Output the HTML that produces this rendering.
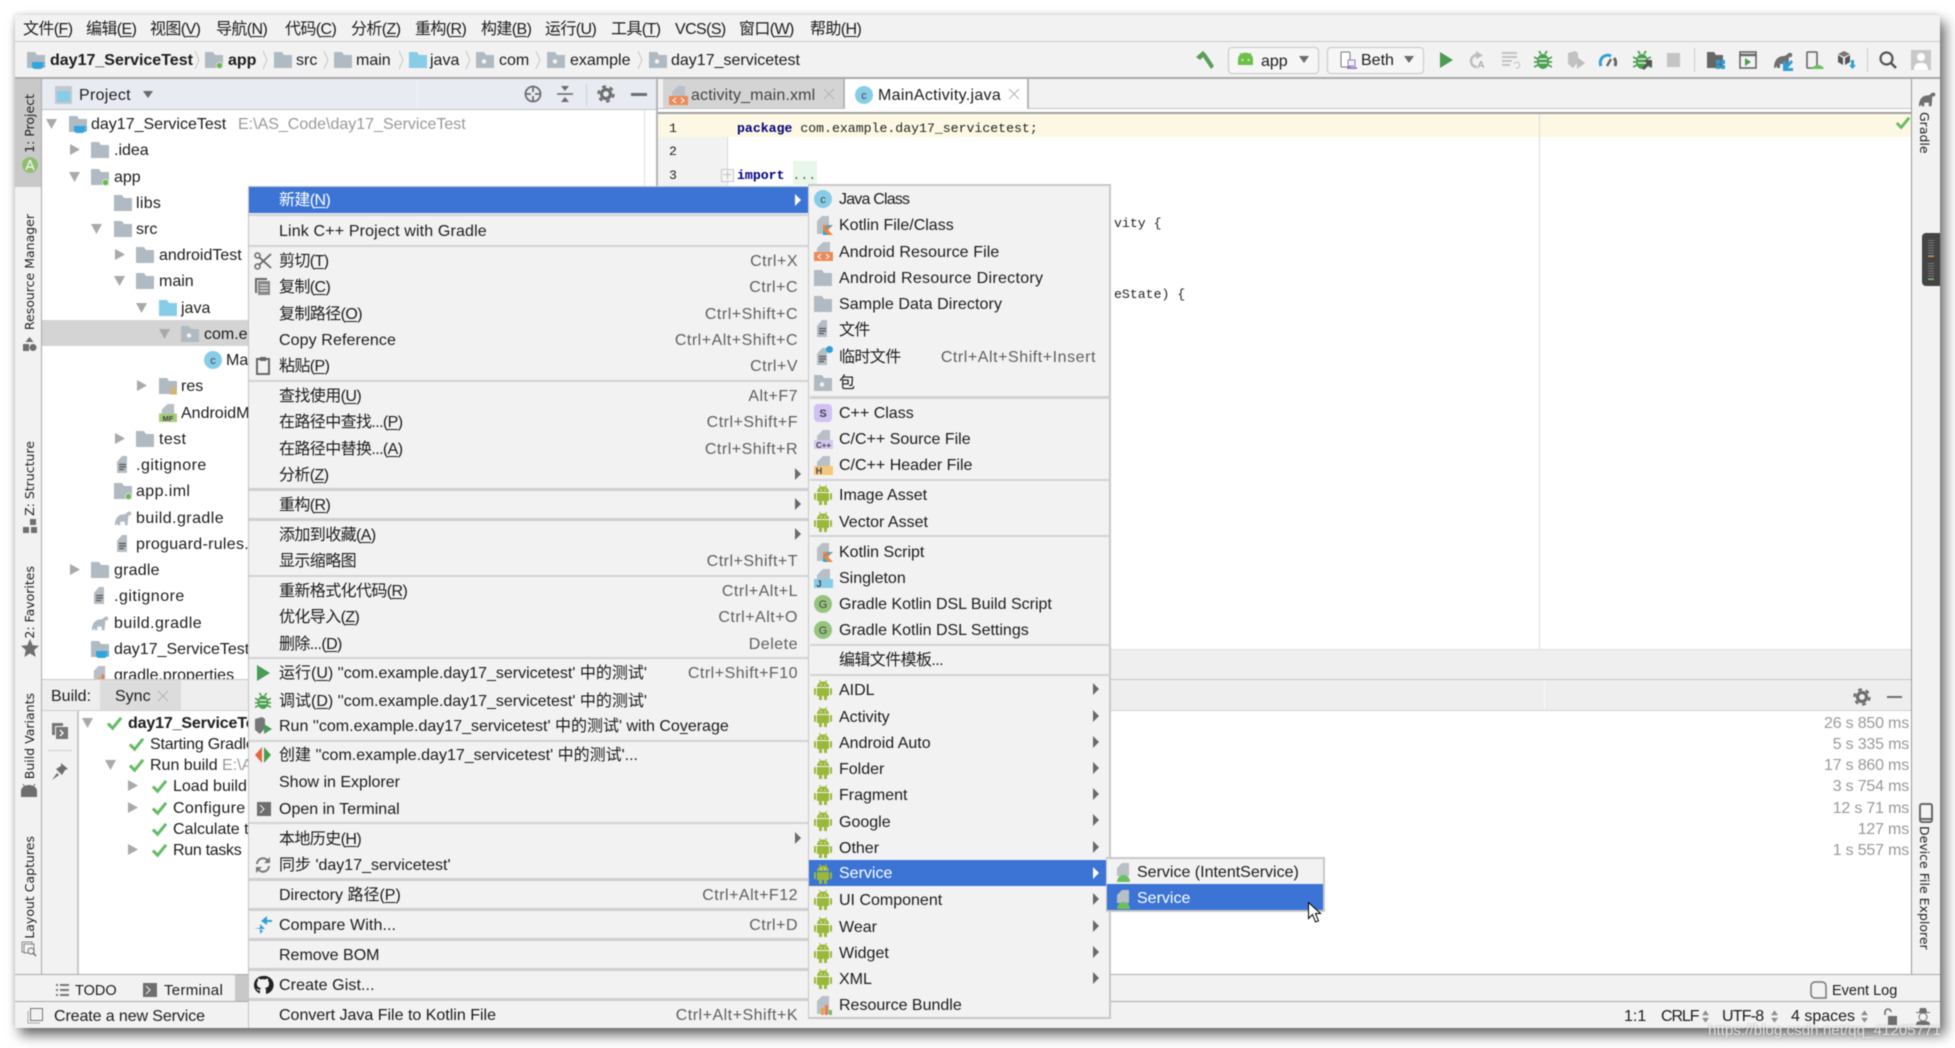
<!DOCTYPE html>
<html lang="zh"><head><meta charset="utf-8"><title>Android Studio</title>
<style>
html,body{margin:0;padding:0;background:#fff}
body{width:1955px;height:1048px;overflow:hidden;position:relative;font:16px "Liberation Sans","Noto Sans CJK SC",sans-serif;color:#1c1c1c}
#w{position:absolute;left:0;top:0;width:1955px;height:1048px;overflow:hidden;filter:blur(.4px)}
.b{position:absolute}
.t{position:absolute;white-space:nowrap;line-height:20px;margin-top:-9px}
.z{letter-spacing:-.6px}
.r{position:absolute;white-space:nowrap;line-height:20px;margin-top:-9px;color:#5f5f5f;text-align:right}
.d{right:1157px;letter-spacing:.5px}
.g{color:#999}
.w{color:#fff}
.i{position:absolute;width:18px;height:18px;overflow:visible}
.sp{position:absolute;left:249px;width:559px;height:2px;background:#d2d2d2}
.sb{position:absolute;left:249px;width:559px;height:3px;background:#cfcfcf}
.sq{position:absolute;left:810px;width:300px;height:2px;background:#d2d2d2}
.v{position:absolute;writing-mode:vertical-rl;transform:rotate(180deg);font:12.5px/16px "DejaVu Sans",sans-serif;color:#222;white-space:nowrap}
.v2{position:absolute;writing-mode:vertical-rl;font:12.5px/16px "DejaVu Sans",sans-serif;color:#222;white-space:nowrap}
.c{font:13.2px/20px "Liberation Mono",monospace;color:#222}
.k{font-weight:bold;color:#000080}
u{text-decoration-thickness:1px;text-underline-offset:2px}
</style></head><body>
<svg width="0" height="0" style="position:absolute">
<defs>
<symbol id="fo" viewBox="0 0 18 18"><path d="M0 1h8l2 3h8v13H0z" fill="#b0bac2"/></symbol>
<symbol id="fb" viewBox="0 0 18 18"><path d="M0 1h8l2 3h8v13H0z" fill="#87cde8"/></symbol>
<symbol id="fp" viewBox="0 0 18 18"><path d="M0 1h8l2 3h8v13H0z" fill="#b0bac2"/><circle cx="8" cy="10.500" r="2.200" fill="#f4f4f4"/></symbol>
<symbol id="fa" viewBox="0 0 18 18"><path d="M0 1h8l2 3h8v13H0z" fill="#b0bac2"/><circle cx="14.500" cy="14.500" r="3.500" fill="#f4f4f4"/><circle cx="14.500" cy="14.500" r="2.800" fill="#6db84b"/></symbol>
<symbol id="fm" viewBox="0 0 18 18"><path d="M0 1h8l2 3h8v13H0z" fill="#b0bac2"/><path d="M5 11h11v4a3 3 0 0 1-3 3H8a3 3 0 0 1-3-3z" fill="#2fa6de"/><path d="M16 12h2v3h-2" fill="none" stroke="#2fa6de"/></symbol>
<symbol id="fr" viewBox="0 0 18 18"><path d="M0 1h8l2 3h8v13H0z" fill="#b0bac2"/><path d="M11 10h7v1.500h-7zM11 13h7v1.500h-7zM11 16h7v1.500h-7z" fill="#e8b04a"/></symbol>
<symbol id="doc" viewBox="0 0 18 18"><path d="M8 0h5v17H3V6z" fill="#b4bcc4"/><path d="M5 8.500h7M5 11h7M5 13.500h5" stroke="#555" stroke-width="1.200"/></symbol>
<symbol id="ele" viewBox="0 0 20 18"><path d="M1 17C1 9 5 5 11 5c2 0 3-2 5-3s4 1 3 3-2 1-3 1l-1 11h-3v-4H7v4H4v-2l-2 2z" fill="#b0bac2"/></symbol>
<symbol id="eld" viewBox="0 0 20 18"><path d="M1 17C1 9 5 5 11 5c2 0 3-2 5-3s4 1 3 3-2 1-3 1l-1 11h-3v-4H7v4H4v-2l-2 2z" fill="#6f6f6f"/></symbol>
<symbol id="td" viewBox="0 0 12 12"><path d="M0 1h11L5.500 11z" fill="#a9a9a9"/></symbol>
<symbol id="tr" viewBox="0 0 12 12"><path d="M1 0v11l10-5.500z" fill="#a9a9a9"/></symbol>
<symbol id="ma" viewBox="0 0 8 12"><path d="M1 0v12l6-6z" fill="#6a6a6a"/></symbol>
<symbol id="mw" viewBox="0 0 8 12"><path d="M1 0v12l6-6z" fill="#fff"/></symbol>
<symbol id="ck" viewBox="0 0 18 18"><path d="M2 9l5 5L16 3" fill="none" stroke="#66bb66" stroke-width="3.200"/></symbol>
<symbol id="an" viewBox="0 0 18 20"><path d="M3 7a6 5.500 0 0 1 12 0z" fill="#9ab83a"/><path d="M5.500 0l1.500 3M12.500 0L11 3" stroke="#9ab83a"/><rect x="3" y="8" width="12" height="8" fill="#9ab83a"/><rect x="0" y="8" width="2" height="7" rx="1" fill="#9ab83a"/><rect x="16" y="8" width="2" height="7" rx="1" fill="#9ab83a"/><rect x="5" y="16" width="3" height="4" fill="#9ab83a"/><rect x="10" y="16" width="3" height="4" fill="#9ab83a"/><circle cx="7" cy="4.800" r=".700" fill="#f2f2f2"/><circle cx="11" cy="4.800" r=".700" fill="#f2f2f2"/></symbol>
<symbol id="cc" viewBox="0 0 18 18"><circle cx="9" cy="9" r="9" fill="#87cde8"/><text x="9" y="13" text-anchor="middle" font-size="11" font-family="Liberation Sans" fill="#444">c</text></symbol>
<symbol id="ggg" viewBox="0 0 18 18"><circle cx="9" cy="9" r="9" fill="#96c47e"/><text x="9" y="13" text-anchor="middle" font-size="11" font-family="Liberation Sans" fill="#444">G</text></symbol>
<symbol id="sss" viewBox="0 0 18 18"><rect width="18" height="18" rx="4" fill="#cfc1f4"/><text x="9" y="13" text-anchor="middle" font-size="11" font-family="Liberation Sans" font-weight="bold" fill="#444">S</text></symbol>
<symbol id="pg" viewBox="0 0 19 19"><path d="M9 0h7v10H3V6z" fill="#b8bfc6"/></symbol>
<symbol id="ar" viewBox="0 0 19 19"><path d="M9 0h7v10H3V6z" fill="#b8bfc6"/><rect y="10" width="19" height="9" fill="#ee8a5a"/><path d="M7 12l-3 2.500L7 17M12 12l3 2.500-3 2.500" fill="none" stroke="#fff"/></symbol>
<symbol id="kt" viewBox="0 0 19 19"><path d="M8 0h7v18H3V5z" fill="#b8bfc6"/><path d="M9 9h10l-5 5 5 5H9z" fill="#f0843c"/><path d="M9 19v-5l5 5zM9 14l5-5h5z" fill="#2fa6de"/></symbol>
<symbol id="cp" viewBox="0 0 19 19"><path d="M9 0h7v10H3V6z" fill="#b8bfc6"/><rect y="10" width="19" height="9" fill="#d5c8f2"/><text x="9.500" y="18" text-anchor="middle" font-size="8" font-weight="bold" font-family="Liberation Sans" fill="#444">C++</text></symbol>
<symbol id="hh" viewBox="0 0 19 19"><path d="M9 0h7v10H3V6z" fill="#b8bfc6"/><rect y="10" width="19" height="9" fill="#f5c77a"/><text x="5" y="18" text-anchor="middle" font-size="9" font-weight="bold" font-family="Liberation Sans" fill="#444">H</text></symbol>
<symbol id="jj" viewBox="0 0 19 19"><path d="M9 0h7v10H3V6z" fill="#b8bfc6"/><rect y="10" width="19" height="9" fill="#87cde8"/><text x="5" y="18" text-anchor="middle" font-size="9" font-weight="bold" font-family="Liberation Sans" fill="#444">J</text></symbol>
<symbol id="mf" viewBox="0 0 19 19"><path d="M9 0h7v10H3V6z" fill="#b8bfc6"/><rect y="10" width="19" height="9" fill="#a5cc7a"/><text x="9.500" y="18" text-anchor="middle" font-size="8" font-weight="bold" font-family="Liberation Sans" fill="#444">MF</text></symbol>
<symbol id="sv" viewBox="0 0 19 19"><path d="M8 0h7v13H3V5z" fill="#b8bfc6"/><path d="M3 19a6.500 7 0 0 1 13 0z" fill="#6cbf5f"/></symbol>
<symbol id="rb" viewBox="0 0 19 19"><path d="M8 0h7v18H3V5z" fill="#b8bfc6"/><path d="M7 12h3v7H7z" fill="#e7a53c"/><path d="M11 9h3v10h-3z" fill="#ee7a4a"/><path d="M15 14h3v5h-3z" fill="#6cbf5f"/></symbol>
<symbol id="bug" viewBox="0 0 18 20"><ellipse cx="9" cy="11.500" rx="6" ry="7.500" fill="#4ba050"/><path d="M0 7l4 2M18 7l-4 2M0 12h4M18 12h-4M0 17l4-2M18 17l-4-2M5 1l2 3M13 1l-2 3" stroke="#4ba050" stroke-width="1.800"/><path d="M5 9h8M5 13h8" stroke="#f2f2f2" stroke-width="1.300"/></symbol>
<symbol id="gear" viewBox="0 0 18 18"><circle cx="9" cy="9" r="4.500" fill="none" stroke="#6e6e6e" stroke-width="3.200"/><circle cx="9" cy="9" r="7.500" fill="none" stroke="#6e6e6e" stroke-width="2.400" stroke-dasharray="3.800 4"/></symbol>
<symbol id="chev" viewBox="0 0 6 18"><path d="M1 0l4 9-4 9" fill="none" stroke="#c8c8c8"/></symbol>
<symbol id="updn" viewBox="0 0 8 14"><path d="M0 5.500L4 0l4 5.500zM0 8.500L4 14l4-5.500z" fill="#8e8e8e"/></symbol>
</defs></svg>
<div id="w">
<div class="b" style="left:15px;top:15px;width:1925px;height:1013px;background:#f2f2f2;box-shadow:5px 7px 12px rgba(0,0,0,.6),-1px -1px 5px rgba(0,0,0,.12)"></div>

<!-- menu bar -->
<div class="t z" style="left:23px;top:29px">文件(<u>F</u>)</div>
<div class="t z" style="left:86px;top:29px">编辑(<u>E</u>)</div>
<div class="t z" style="left:150px;top:29px">视图(<u>V</u>)</div>
<div class="t z" style="left:216px;top:29px">导航(<u>N</u>)</div>
<div class="t z" style="left:285px;top:29px">代码(<u>C</u>)</div>
<div class="t z" style="left:351px;top:29px">分析(<u>Z</u>)</div>
<div class="t z" style="left:415px;top:29px">重构(<u>R</u>)</div>
<div class="t z" style="left:481px;top:29px">构建(<u>B</u>)</div>
<div class="t z" style="left:545px;top:29px">运行(<u>U</u>)</div>
<div class="t z" style="left:611px;top:29px">工具(<u>T</u>)</div>
<div class="t z" style="left:675px;top:29px">VCS(<u>S</u>)</div>
<div class="t z" style="left:739px;top:29px">窗口(<u>W</u>)</div>
<div class="t z" style="left:810px;top:29px">帮助(<u>H</u>)</div>
<div class="b" style="left:15px;top:41px;width:1925px;height:1px;background:#c9c9c9"></div>

<!-- breadcrumb -->
<svg class="i" style="left:27px;top:51px"><use href="#fm"/></svg>
<div class="t" style="left:50px;top:60px;font-weight:bold">day17_ServiceTest</div>
<svg class="i" style="left:194px;top:51px;width:6px"><use href="#chev"/></svg>
<svg class="i" style="left:205px;top:51px"><use href="#fa"/></svg>
<div class="t" style="left:228px;top:60px;font-weight:bold">app</div>
<svg class="i" style="left:262px;top:51px;width:6px"><use href="#chev"/></svg>
<svg class="i" style="left:274px;top:51px"><use href="#fo"/></svg>
<div class="t" style="left:296px;top:60px">src</div>
<svg class="i" style="left:323px;top:51px;width:6px"><use href="#chev"/></svg>
<svg class="i" style="left:334px;top:51px"><use href="#fo"/></svg>
<div class="t" style="left:356px;top:60px">main</div>
<svg class="i" style="left:398px;top:51px;width:6px"><use href="#chev"/></svg>
<svg class="i" style="left:409px;top:51px"><use href="#fb"/></svg>
<div class="t" style="left:430px;top:60px">java</div>
<svg class="i" style="left:465px;top:51px;width:6px"><use href="#chev"/></svg>
<svg class="i" style="left:476px;top:51px"><use href="#fp"/></svg>
<div class="t" style="left:499px;top:60px">com</div>
<svg class="i" style="left:535px;top:51px;width:6px"><use href="#chev"/></svg>
<svg class="i" style="left:547px;top:51px"><use href="#fp"/></svg>
<div class="t" style="left:570px;top:60px">example</div>
<svg class="i" style="left:637px;top:51px;width:6px"><use href="#chev"/></svg>
<svg class="i" style="left:649px;top:51px"><use href="#fp"/></svg>
<div class="t" style="left:671px;top:60px">day17_servicetest</div>
<div class="b" style="left:15px;top:77px;width:1925px;height:2px;background:#a9a9a9"></div>

<!-- toolbar -->
<svg class="i" style="left:1195px;top:50px;width:20px;height:20px" viewBox="0 0 20 20"><path d="M1 7l7-6 3 3-6 6zM8 7l3-3 8 12-3 3z" fill="#5a9e5a"/></svg>
<div class="b" style="left:1228px;top:47px;width:89px;height:25px;border:1px solid #c6c6c6;border-radius:4px;background:#f6f6f6"></div>
<svg class="i" style="left:1238px;top:53px;width:15px;height:12px" viewBox="0 0 15 12"><path d="M0 12V6a7 6 0 0 1 15 0v6z" fill="#6cc04a"/><path d="M2 0l2 3M13 0l-2 3" stroke="#6cc04a"/><circle cx="4.500" cy="7" r="1" fill="#f2f2f2"/><circle cx="10.500" cy="7" r="1" fill="#f2f2f2"/></svg>
<div class="t" style="left:1261px;top:61px">app</div>
<svg class="i" style="left:1299px;top:56px;width:10px;height:8px" viewBox="0 0 10 8"><path d="M0 0h10L5 7z" fill="#6a6a6a"/></svg>
<div class="b" style="left:1327px;top:47px;width:95px;height:25px;border:1px solid #c6c6c6;border-radius:4px;background:#f6f6f6"></div>
<svg class="i" style="left:1340px;top:51px;width:17px;height:19px" viewBox="0 0 17 19"><rect x="1" y="1" width="9" height="15" rx="1" fill="#fff" stroke="#777"/><rect x="8" y="9" width="7" height="6" fill="#f2f2f2" stroke="#9a7ec8"/><path d="M7 17h10" stroke="#9a7ec8" stroke-width="2"/></svg>
<div class="t" style="left:1361px;top:60px">Beth</div>
<svg class="i" style="left:1404px;top:56px;width:10px;height:8px" viewBox="0 0 10 8"><path d="M0 0h10L5 7z" fill="#6a6a6a"/></svg>

<svg class="i" style="left:1437px;top:51px" viewBox="0 0 18 18"><path d="M3 1l13 8-13 8z" fill="#499c54"/></svg>
<svg class="i" style="left:1468px;top:51px" viewBox="0 0 18 18"><path d="M9 4a6 6 0 1 0 0 12" fill="none" stroke="#bdbdbd" stroke-width="2.400"/><path d="M8 0l7 4.500L8 8z" fill="#bdbdbd"/><text x="13" y="17" font-size="10" font-family="Liberation Sans" text-anchor="middle" fill="#999">A</text></svg>
<svg class="i" style="left:1502px;top:51px" viewBox="0 0 18 18"><path d="M0 2h15M0 6h15M0 10h10M0 14h8" stroke="#c2c2c2" stroke-width="2"/><path d="M12 13a3 3 0 1 1 2 4" fill="none" stroke="#c2c2c2"/></svg>
<svg class="i" style="left:1534px;top:50px;width:18px;height:20px"><use href="#bug"/></svg>
<svg class="i" style="left:1567px;top:51px" viewBox="0 0 18 18"><path d="M1 2l7-2 3 2v9l-5 6-5-4z" fill="#c2c2c2"/><path d="M10 6l8 6-8 6z" fill="#bdbdbd"/></svg>
<svg class="i" style="left:1599px;top:51px" viewBox="0 0 18 18"><path d="M2 15a7.500 7.500 0 0 1 10-10" fill="none" stroke="#2f9ed8" stroke-width="3"/><path d="M15 7a7.500 7.500 0 0 1 1 8" fill="none" stroke="#666" stroke-width="3"/><path d="M8 15l4-7" stroke="#666" stroke-width="2.400"/></svg>
<svg class="i" style="left:1633px;top:50px;width:18px;height:20px"><use href="#bug"/></svg>
<svg class="i" style="left:1642px;top:60px;width:10px;height:10px" viewBox="0 0 10 10"><path d="M2 0h8v8L7 5 2 10 0 8l5-5z" fill="#555"/></svg>
<div class="b" style="left:1667px;top:53px;width:13px;height:14px;background:#c4c4c4"></div>
<div class="b" style="left:1694px;top:48px;width:1px;height:24px;background:#cdcdcd"></div>
<svg class="i" style="left:1707px;top:51px" viewBox="0 0 18 18"><path d="M0 1h7l2 3h7v13H0z" fill="#666"/><path d="M9 9h4v4H9zM14 9h4v4h-4zM9 14h4v4H9zM14 14h4v4h-4z" fill="#2f9ed8"/></svg>
<svg class="i" style="left:1739px;top:51px" viewBox="0 0 18 18"><rect x="1" y="1" width="16" height="16" fill="#f4f4f4" stroke="#666" stroke-width="1.600"/><path d="M1 4h16" stroke="#666" stroke-width="2.400"/><path d="M6 7v8l6-4z" fill="#499c54"/></svg>
<svg class="i" style="left:1773px;top:51px;width:20px;height:18px"><use href="#eld"/></svg>
<svg class="i" style="left:1782px;top:60px;width:11px;height:11px" viewBox="0 0 11 11"><path d="M11 2l-2-2-5 5V1H1v10h10V8H6z" fill="#2f9ed8"/></svg>
<svg class="i" style="left:1806px;top:51px" viewBox="0 0 18 18"><rect x="1" y="1" width="10" height="16" rx="1" fill="none" stroke="#666" stroke-width="1.600"/><path d="M6 18a6.500 6.500 0 0 1 12 0z" fill="#6cbf5f"/></svg>
<svg class="i" style="left:1838px;top:51px" viewBox="0 0 18 18"><path d="M6 0l6 3-6 3-6-3z" fill="#777"/><path d="M0 4l5 3v7l-5-3zM12 4L7 7v7l5-3z" fill="#555"/><path d="M13 9h3v5h2l-3.500 4-3.500-4h2z" fill="#2f9ed8"/></svg>
<div class="b" style="left:1867px;top:48px;width:1px;height:24px;background:#cdcdcd"></div>
<svg class="i" style="left:1879px;top:51px" viewBox="0 0 18 18"><circle cx="7.500" cy="7.500" r="6" fill="none" stroke="#555" stroke-width="2.200"/><path d="M12 12l5 5" stroke="#555" stroke-width="2.600"/></svg>
<svg class="i" style="left:1911px;top:50px;width:20px;height:20px" viewBox="0 0 20 20"><rect width="20" height="20" fill="#c8c8c8"/><circle cx="10" cy="7" r="4" fill="#fff"/><path d="M3 20c0-6 3-7 7-7s7 1 7 7z" fill="#fff"/></svg>

<!-- project panel -->
<div class="b" style="left:15px;top:79px;width:26px;height:949px;background:#f2f2f2"></div>
<div class="b" style="left:15px;top:79px;width:26px;height:108px;background:#c9c9c9"></div>
<div class="b" style="left:41px;top:79px;width:1px;height:895px;background:#a9a9a9"></div>
<div class="b" style="left:42px;top:79px;width:614px;height:30px;background:#e8ebf1"></div>
<div class="b" style="left:42px;top:109px;width:614px;height:1px;background:#c4c4c4"></div>
<div class="b" style="left:417px;top:79px;width:1px;height:30px;background:#f4f4f8"></div>
<div class="b" style="left:42px;top:110px;width:614px;height:570px;background:#fff"></div>
<div class="b" style="left:644px;top:110px;width:1px;height:570px;background:#e0e0e0"></div>
<div class="b" style="left:656px;top:79px;width:2px;height:600px;background:#b5b5b5"></div>
<svg class="i" style="left:55px;top:86px" viewBox="0 0 18 18"><rect x="0" y="0" width="17" height="18" fill="#c4c9ce"/><rect x="2" y="5" width="13" height="11" fill="#87cde8"/></svg>
<div class="t" style="left:79px;top:95px;letter-spacing:.3px">Project</div>
<svg class="i" style="left:143px;top:91px;width:10px;height:8px" viewBox="0 0 10 8"><path d="M0 0h10L5 7z" fill="#6a6a6a"/></svg>
<svg class="i" style="left:524px;top:85px" viewBox="0 0 18 18"><circle cx="9" cy="9" r="7.500" fill="none" stroke="#6e6e6e" stroke-width="1.800"/><path d="M9 1v6M9 11v6M1 9h6M11 9h6" stroke="#6e6e6e" stroke-width="1.800"/></svg>
<svg class="i" style="left:556px;top:85px" viewBox="0 0 18 18"><path d="M1 9h16" stroke="#6e6e6e" stroke-width="1.600"/><path d="M5 1h8L9 6zM5 17h8L9 12z" fill="#6e6e6e"/></svg>
<div class="b" style="left:586px;top:84px;width:1px;height:22px;background:#cdcfd6"></div>
<svg class="i" style="left:597px;top:85px"><use href="#gear"/></svg>
<div class="b" style="left:631px;top:93px;width:16px;height:3px;background:#6e6e6e"></div>

<div class="b" style="left:42px;top:320px;width:220px;height:26px;background:#d4d4d4"></div>
<svg class="i" style="left:46px;top:118px;width:12px;height:12px"><use href="#td"/></svg>
<svg class="i" style="left:69px;top:115px"><use href="#fm"/></svg>
<div class="t" style="left:91px;top:124px">day17_ServiceTest</div>
<div class="t g" style="left:238px;top:124px">E:\AS_Code\day17_ServiceTest</div>
<svg class="i" style="left:69px;top:144px;width:12px;height:12px"><use href="#tr"/></svg>
<svg class="i" style="left:91px;top:141px"><use href="#fo"/></svg>
<div class="t" style="left:114px;top:150px">.idea</div>
<svg class="i" style="left:69px;top:171px;width:12px;height:12px"><use href="#td"/></svg>
<svg class="i" style="left:91px;top:168px"><use href="#fa"/></svg>
<div class="t" style="left:114px;top:177px">app</div>
<svg class="i" style="left:114px;top:194px"><use href="#fo"/></svg>
<div class="t" style="left:136px;top:203px;letter-spacing:.3px">libs</div>
<svg class="i" style="left:91px;top:223px;width:12px;height:12px"><use href="#td"/></svg>
<svg class="i" style="left:114px;top:220px"><use href="#fo"/></svg>
<div class="t" style="left:136px;top:229px">src</div>
<svg class="i" style="left:114px;top:249px;width:12px;height:12px"><use href="#tr"/></svg>
<svg class="i" style="left:136px;top:246px"><use href="#fo"/></svg>
<div class="t" style="left:159px;top:255px">androidTest</div>
<svg class="i" style="left:114px;top:275px;width:12px;height:12px"><use href="#td"/></svg>
<svg class="i" style="left:136px;top:272px"><use href="#fo"/></svg>
<div class="t" style="left:159px;top:281px">main</div>
<svg class="i" style="left:136px;top:302px;width:12px;height:12px"><use href="#td"/></svg>
<svg class="i" style="left:159px;top:299px"><use href="#fb"/></svg>
<div class="t" style="left:181px;top:308px">java</div>
<svg class="i" style="left:159px;top:328px;width:12px;height:12px"><use href="#td"/></svg>
<svg class="i" style="left:181px;top:325px"><use href="#fp"/></svg>
<div class="t" style="left:204px;top:334px">com.example.day17_servicetest</div>
<svg class="i" style="left:204px;top:351px"><use href="#cc"/></svg>
<div class="t" style="left:226px;top:360px">MainActivity</div>
<svg class="i" style="left:136px;top:380px;width:12px;height:12px"><use href="#tr"/></svg>
<svg class="i" style="left:159px;top:377px"><use href="#fr"/></svg>
<div class="t" style="left:181px;top:386px">res</div>
<svg class="i" style="left:159px;top:404px"><use href="#mf"/></svg>
<div class="t" style="left:181px;top:413px">AndroidManifest.xml</div>
<svg class="i" style="left:114px;top:433px;width:12px;height:12px"><use href="#tr"/></svg>
<svg class="i" style="left:136px;top:430px"><use href="#fo"/></svg>
<div class="t" style="left:159px;top:439px;letter-spacing:.4px">test</div>
<svg class="i" style="left:114px;top:456px"><use href="#doc"/></svg>
<div class="t" style="left:136px;top:465px;letter-spacing:.5px">.gitignore</div>
<svg class="i" style="left:114px;top:482px"><use href="#fa"/></svg>
<div class="t" style="left:136px;top:491px;letter-spacing:.4px">app.iml</div>
<svg class="i" style="left:114px;top:509px"><use href="#ele"/></svg>
<div class="t" style="left:136px;top:518px;letter-spacing:.45px">build.gradle</div>
<svg class="i" style="left:114px;top:535px"><use href="#doc"/></svg>
<div class="t" style="left:136px;top:544px;letter-spacing:.3px">proguard-rules.pro</div>
<svg class="i" style="left:69px;top:564px;width:12px;height:12px"><use href="#tr"/></svg>
<svg class="i" style="left:91px;top:561px"><use href="#fo"/></svg>
<div class="t" style="left:114px;top:570px;letter-spacing:.2px">gradle</div>
<svg class="i" style="left:91px;top:587px"><use href="#doc"/></svg>
<div class="t" style="left:114px;top:596px;letter-spacing:.5px">.gitignore</div>
<svg class="i" style="left:91px;top:614px"><use href="#ele"/></svg>
<div class="t" style="left:114px;top:623px;letter-spacing:.45px">build.gradle</div>
<svg class="i" style="left:91px;top:640px"><use href="#fm"/></svg>
<div class="t" style="left:114px;top:649px">day17_ServiceTest.iml</div>
<svg class="i" style="left:91px;top:666px"><use href="#rb"/></svg>
<div class="t" style="left:114px;top:675px">gradle.properties</div>

<!-- editor -->
<div class="b" style="left:658px;top:79px;width:1254px;height:29px;background:#f2f2f2"></div>
<div class="b" style="left:658px;top:108px;width:1254px;height:1px;background:#c4c4c4"></div>
<div class="b" style="left:663px;top:79px;width:180px;height:29px;background:#d4d4d4;border-right:2px solid #b5b5b5"></div>
<div class="b" style="left:845px;top:79px;width:182px;height:30px;background:#fff;border-right:2px solid #b5b5b5"></div>
<svg class="i" style="left:669px;top:86px;width:19px;height:19px"><use href="#ar"/></svg>
<div class="t" style="left:691px;top:95px;color:#444;letter-spacing:.15px">activity_main.xml</div>
<svg class="i" style="left:824px;top:89px;width:10px;height:10px" viewBox="0 0 10 10"><path d="M0 0l10 10M10 0L0 10" stroke="#b5b5b5"/></svg>
<svg class="i" style="left:855px;top:86px"><use href="#cc"/></svg>
<div class="t" style="left:878px;top:95px;letter-spacing:.3px">MainActivity.java</div>
<svg class="i" style="left:1009px;top:89px;width:10px;height:10px" viewBox="0 0 10 10"><path d="M0 0l10 10M10 0L0 10" stroke="#b5b5b5"/></svg>
<div class="b" style="left:658px;top:109px;width:1254px;height:3px;background:#fff"></div>
<div class="b" style="left:658px;top:112px;width:1254px;height:2px;background:#a0a0a0"></div>
<div class="b" style="left:658px;top:114px;width:1254px;height:535px;background:#fff"></div>
<div class="b" style="left:658px;top:114px;width:69px;height:535px;background:#f2f2f2;border-right:1px solid #d8d8d8"></div>
<div class="b" style="left:658px;top:114px;width:1254px;height:23px;background:#fdf8e3"></div>
<div class="t c g" style="left:669px;top:128px">1</div>
<div class="t c g" style="left:669px;top:151px">2</div>
<div class="t c g" style="left:669px;top:175px">3</div>
<div class="t c" style="left:737px;top:128px"><span class="k">package</span> com.example.day17_servicetest;</div>
<div class="b" style="left:793px;top:161px;width:24px;height:24px;background:#e9f6ea"></div>
<div class="b" style="left:721px;top:169px;width:11px;height:11px;border:1px solid #c8c8c8;background:#f6f6f6"></div>
<div class="b" style="left:723px;top:174px;width:8px;height:1px;background:#bbb"></div>
<div class="b" style="left:727px;top:171px;width:1px;height:8px;background:#bbb"></div>
<div class="t c" style="left:737px;top:175px"><span class="k">import</span> <span style="color:#555">...</span></div>
<div class="t c" style="left:1114px;top:223px">vity {</div>
<div class="t c" style="left:1114px;top:294px">eState) {</div>
<div class="b" style="left:1539px;top:114px;width:1px;height:535px;background:#dcdcdc"></div>
<svg class="i" style="left:1895px;top:115px;width:16px;height:16px"><use href="#ck"/></svg>
<div class="b" style="left:658px;top:649px;width:1254px;height:1px;background:#ddd"></div>
<div class="b" style="left:658px;top:650px;width:1254px;height:29px;background:#efefef"></div>

<!-- right strip -->
<div class="b" style="left:1911px;top:79px;width:1px;height:895px;background:#999"></div>
<svg class="i" style="left:1918px;top:90px"><use href="#eld"/></svg>
<div class="v2" style="left:1916px;top:112px;font-size:12.5px">Gradle</div>
<div class="b" style="left:1922px;top:233px;width:18px;height:53px;background:#444;border-radius:4px 0 0 4px"></div>
<div class="b" style="left:1928px;top:240px;width:6px;height:16px;background:repeating-linear-gradient(#777 0 1px,#444 1px 2.500px)"></div>
<div class="b" style="left:1928px;top:256px;width:6px;height:1px;background:#e8962c"></div>
<div class="b" style="left:1928px;top:263px;width:6px;height:16px;background:repeating-linear-gradient(#777 0 1px,#444 1px 2.500px)"></div>
<div class="b" style="left:1928px;top:279px;width:6px;height:1px;background:#7ec84a"></div>
<svg class="i" style="left:1917px;top:804px" viewBox="0 0 18 18"><rect x="3" y="0" width="12" height="18" rx="2" fill="#f4f4f4" stroke="#666" stroke-width="2"/><path d="M3 15h12" stroke="#666" stroke-width="2"/></svg>
<div class="v2" style="left:1916px;top:826px">Device File Explorer</div>

<!-- build panel -->
<div class="b" style="left:42px;top:679px;width:1869px;height:1px;background:#c9c9c9"></div>
<div class="b" style="left:42px;top:680px;width:1869px;height:30px;background:#eeeeee"></div>
<div class="b" style="left:100px;top:680px;width:81px;height:30px;background:#dcdcdc"></div>
<div class="b" style="left:1544px;top:680px;width:1px;height:30px;background:#fafafa"></div>
<div class="t" style="left:51px;top:696px">Build:</div>
<div class="t" style="left:115px;top:696px">Sync</div>
<svg class="i" style="left:158px;top:691px;width:10px;height:10px" viewBox="0 0 10 10"><path d="M0 0l10 10M10 0L0 10" stroke="#b5b5b5"/></svg>
<svg class="i" style="left:1853px;top:688px"><use href="#gear"/></svg>
<div class="b" style="left:1887px;top:696px;width:15px;height:2px;background:#6e6e6e"></div>
<div class="b" style="left:42px;top:710px;width:1869px;height:1px;background:#cfcfcf"></div>
<div class="b" style="left:42px;top:711px;width:36px;height:263px;background:#f2f2f2"></div>
<div class="b" style="left:78px;top:711px;width:1833px;height:263px;background:#fff"></div>
<div class="b" style="left:77px;top:711px;width:2px;height:263px;background:#c8c8c8"></div>
<svg class="i" style="left:51px;top:722px" viewBox="0 0 18 18"><path d="M1 1h11v3H4v9H1z" fill="#777"/><rect x="5" y="5" width="12" height="12" fill="#777"/><path d="M9 8l3 3-3 3" fill="none" stroke="#fff" stroke-width="1.400"/></svg>
<div class="b" style="left:48px;top:750px;width:24px;height:1px;background:#cfcfcf"></div>
<svg class="i" style="left:51px;top:762px" viewBox="0 0 18 18"><path d="M10 1l7 6-3 1-3 5-6-6 5-3zM6 11l-5 7 7-5z" fill="#6e6e6e"/></svg>

<svg class="i" style="left:82px;top:717px;width:12px;height:12px"><use href="#td"/></svg>
<svg class="i" style="left:106px;top:715px;width:17px;height:17px"><use href="#ck"/></svg>
<div class="t" style="left:128px;top:723px;font-weight:bold;letter-spacing:-.15px">day17_ServiceTest: successful</div>
<svg class="i" style="left:128px;top:736px;width:17px;height:17px"><use href="#ck"/></svg>
<div class="t" style="left:150px;top:744px;letter-spacing:-.2px">Starting Gradle Daemon</div>
<svg class="i" style="left:105px;top:759px;width:12px;height:12px"><use href="#td"/></svg>
<svg class="i" style="left:128px;top:757px;width:17px;height:17px"><use href="#ck"/></svg>
<div class="t" style="left:150px;top:765px">Run build <span class="g">E:\AS_Code\day17_ServiceTest</span></div>
<svg class="i" style="left:127px;top:780px;width:12px;height:12px"><use href="#tr"/></svg>
<svg class="i" style="left:151px;top:778px;width:17px;height:17px"><use href="#ck"/></svg>
<div class="t" style="left:173px;top:786px">Load build</div>
<svg class="i" style="left:127px;top:802px;width:12px;height:12px"><use href="#tr"/></svg>
<svg class="i" style="left:151px;top:800px;width:17px;height:17px"><use href="#ck"/></svg>
<div class="t" style="left:173px;top:808px;letter-spacing:.35px">Configure build</div>
<svg class="i" style="left:151px;top:821px;width:17px;height:17px"><use href="#ck"/></svg>
<div class="t" style="left:173px;top:829px">Calculate task graph</div>
<svg class="i" style="left:127px;top:844px;width:12px;height:12px"><use href="#tr"/></svg>
<svg class="i" style="left:151px;top:842px;width:17px;height:17px"><use href="#ck"/></svg>
<div class="t" style="left:173px;top:850px;letter-spacing:-.3px">Run tasks</div>

<div class="r g" style="right:46px;top:723px;letter-spacing:-.2px">26 s 850 ms</div>
<div class="r g" style="right:46px;top:744px;letter-spacing:-.2px">5 s 335 ms</div>
<div class="r g" style="right:46px;top:765px;letter-spacing:-.2px">17 s 860 ms</div>
<div class="r g" style="right:46px;top:786px;letter-spacing:-.2px">3 s 754 ms</div>
<div class="r g" style="right:46px;top:808px;letter-spacing:-.2px">12 s 71 ms</div>
<div class="r g" style="right:46px;top:829px;letter-spacing:-.2px">127 ms</div>
<div class="r g" style="right:46px;top:850px;letter-spacing:-.2px">1 s 557 ms</div>

<!-- left strip labels -->
<div class="v" style="left:22px;top:94px">1: Project</div>
<svg class="i" style="left:22px;top:157px;width:16px;height:16px" viewBox="0 0 16 16"><circle cx="8" cy="8" r="8" fill="#8fbf6e"/><path d="M8 3L4 13M8 3l4 10M5 10h6" stroke="#f2f2f2" stroke-width="1.400" fill="none"/></svg>
<div class="v" style="left:22px;top:214px">Resource Manager</div>
<svg class="i" style="left:22px;top:337px;width:15px;height:14px" viewBox="0 0 15 14"><path d="M7.500 0l4 5h-8z" fill="#6e6e6e"/><rect x="1" y="7" width="6" height="7" fill="#6e6e6e"/><circle cx="11" cy="10.500" r="3.500" fill="#6e6e6e"/></svg>
<div class="v" style="left:22px;top:441px">Z: Structure</div>
<svg class="i" style="left:23px;top:519px;width:14px;height:14px" viewBox="0 0 14 14"><path d="M7 0h6v6H7zM0 8h6v6H0zM8 8h6v6H8z" fill="#6e6e6e"/></svg>
<div class="v" style="left:22px;top:566px">2: Favorites</div>
<svg class="i" style="left:21px;top:639px" viewBox="0 0 18 18"><path d="M9 0l2.700 6.200 6.300.6-4.800 4.300 1.500 6.900L9 14.400 3.300 18l1.500-6.900L0 6.800l6.300-.6z" fill="#6e6e6e"/></svg>
<div class="v" style="left:22px;top:693px">Build Variants</div>
<svg class="i" style="left:21px;top:784px;width:16px;height:13px" viewBox="0 0 16 13"><path d="M0 13V7a8 6 0 0 1 16 0v6z" fill="#6e6e6e"/><path d="M2 0l2 3M14 0l-2 3" stroke="#6e6e6e"/></svg>
<div class="v" style="left:22px;top:836px">Layout Captures</div>
<svg class="i" style="left:21px;top:941px;width:16px;height:16px" viewBox="0 0 16 16"><path d="M1 1h10v3M1 1v10h3" fill="none" stroke="#8a8a8a"/><rect x="3" y="3" width="10" height="9" fill="none" stroke="#8a8a8a"/><circle cx="10" cy="10" r="3" fill="#f2f2f2" stroke="#6e6e6e"/><path d="M12 12l3 3" stroke="#6e6e6e" stroke-width="1.500"/></svg>

<!-- bottom bars -->
<div class="b" style="left:15px;top:974px;width:1925px;height:1px;background:#a9a9a9"></div>
<div class="b" style="left:15px;top:1001px;width:1925px;height:1px;background:#a9a9a9"></div>
<div class="b" style="left:235px;top:975px;width:14px;height:26px;background:#c8c8c8"></div>
<svg class="i" style="left:56px;top:984px;width:13px;height:12px" viewBox="0 0 13 12"><path d="M0 1h2M4 1h9M0 6h2M4 6h9M0 11h2M4 11h9" stroke="#777" stroke-width="2"/></svg>
<div class="t" style="left:75px;top:990px;font-size:14.5px">TODO</div>
<svg class="i" style="left:143px;top:983px;width:14px;height:14px" viewBox="0 0 14 14"><rect width="14" height="14" fill="#6e6e6e"/><path d="M3 3l4 4-4 4" fill="none" stroke="#f2f2f2"/></svg>
<div class="t" style="left:164px;top:990px;font-size:15px;letter-spacing:.3px">Terminal</div>
<svg class="i" style="left:27px;top:1008px;width:16px;height:16px" viewBox="0 0 16 16"><rect x="3.500" y=".500" width="12" height="12" fill="none" stroke="#777"/><path d="M1 3v12h12" fill="none" stroke="#aaa"/></svg>
<div class="t" style="left:54px;top:1016px;letter-spacing:-.1px">Create a new Service</div>
<svg class="i" style="left:1810px;top:981px;width:17px;height:18px" viewBox="0 0 17 18"><path d="M5 1h7a4 4 0 0 1 4 4v12H5a4 4 0 0 1-4-4V5a4 4 0 0 1 4-4z" fill="none" stroke="#777" stroke-width="1.500"/></svg>
<div class="t" style="left:1832px;top:990px;font-size:14.5px">Event Log</div>
<div class="t" style="left:1624px;top:1016px">1:1</div>
<div class="t" style="left:1661px;top:1016px;letter-spacing:-1.1px">CRLF</div>
<svg class="i" style="left:1702px;top:1010px;width:7px;height:13px"><use href="#updn"/></svg>
<div class="t" style="left:1722px;top:1016px;letter-spacing:-.8px">UTF-8</div>
<svg class="i" style="left:1771px;top:1010px;width:7px;height:13px"><use href="#updn"/></svg>
<div class="t" style="left:1791px;top:1016px">4 spaces</div>
<svg class="i" style="left:1861px;top:1010px;width:7px;height:13px"><use href="#updn"/></svg>
<svg class="i" style="left:1883px;top:1008px;width:14px;height:17px" viewBox="0 0 14 17"><path d="M2 7V4a3 3 0 0 1 6 0" fill="none" stroke="#6e6e6e" stroke-width="1.600"/><rect x="5" y="8" width="9" height="9" fill="#6e6e6e"/></svg>
<svg class="i" style="left:1914px;top:1007px" viewBox="0 0 18 18"><path d="M5 5l1-4h6l1 4h3v1H2V5z" fill="#6e6e6e"/><circle cx="9" cy="10" r="4" fill="#f2f2f2" stroke="#6e6e6e"/><path d="M2 18c0-4 3-4 7-4s7 0 7 4z" fill="#6e6e6e"/></svg>

<!-- context menu -->
<div class="b" style="left:248px;top:186px;width:565px;height:842px;background:#f2f2f2;border-left:1px solid #c4c4c4;border-top:1px solid #c4c4c4;box-sizing:border-box"></div>
<div class="b" style="left:249px;top:187px;width:560px;height:26px;background:#3b74d4"></div>
<div class="t z w" style="left:279px;top:200px">新建(<u>N</u>)</div>
<svg class="i" style="left:794px;top:194px;width:8px;height:12px"><use href="#mw"/></svg>
<div class="sp" style="top:214px"></div>
<div class="t" style="left:279px;top:231px;letter-spacing:.15px">Link C++ Project with Gradle</div>
<div class="sp" style="top:245px"></div>
<svg class="i" style="left:254px;top:252px" viewBox="0 0 18 18"><circle cx="3.500" cy="3.500" r="2.500" fill="none" stroke="#666" stroke-width="1.500"/><circle cx="3.500" cy="14.500" r="2.500" fill="none" stroke="#666" stroke-width="1.500"/><path d="M5 5l12 11M5 13L17 2" stroke="#666" stroke-width="1.800"/></svg>
<div class="t z" style="left:279px;top:261px">剪切(<u>T</u>)</div>
<div class="r d" style="top:261px">Ctrl+X</div>
<svg class="i" style="left:255px;top:278px;width:16px;height:18px" viewBox="0 0 16 18"><path d="M0 0h12v2H2v13H0z" fill="#666"/><rect x="3" y="3" width="12" height="14" fill="#888"/><path d="M5 7h8M5 10h8M5 13h8" stroke="#eee"/></svg>
<div class="t z" style="left:279px;top:287px">复制(<u>C</u>)</div>
<div class="r d" style="top:287px">Ctrl+C</div>
<div class="t z" style="left:279px;top:314px">复制路径(<u>O</u>)</div>
<div class="r d" style="top:314px">Ctrl+Shift+C</div>
<div class="t" style="left:279px;top:340px;letter-spacing:.1px">Copy Reference</div>
<div class="r d" style="top:340px">Ctrl+Alt+Shift+C</div>
<svg class="i" style="left:256px;top:357px;width:14px;height:18px" viewBox="0 0 14 18"><rect x="1" y="2" width="12" height="15" fill="#f2f2f2" stroke="#666" stroke-width="2"/><rect x="4" y="0" width="6" height="4" fill="#666"/></svg>
<div class="t z" style="left:279px;top:366px">粘贴(<u>P</u>)</div>
<div class="r d" style="top:366px">Ctrl+V</div>
<div class="sp" style="top:380px"></div>
<div class="t z" style="left:279px;top:396px">查找使用(<u>U</u>)</div>
<div class="r d" style="top:396px">Alt+F7</div>
<div class="t z" style="left:279px;top:422px">在路径中查找...(<u>P</u>)</div>
<div class="r d" style="top:422px">Ctrl+Shift+F</div>
<div class="t z" style="left:279px;top:449px">在路径中替换...(<u>A</u>)</div>
<div class="r d" style="top:449px">Ctrl+Shift+R</div>
<div class="t z" style="left:279px;top:475px">分析(<u>Z</u>)</div>
<svg class="i" style="left:794px;top:468px;width:8px;height:12px"><use href="#ma"/></svg>
<div class="sb" style="top:488px"></div>
<div class="t z" style="left:279px;top:505px">重构(<u>R</u>)</div>
<svg class="i" style="left:794px;top:498px;width:8px;height:12px"><use href="#ma"/></svg>
<div class="sb" style="top:518px"></div>
<div class="t z" style="left:279px;top:535px">添加到收藏(<u>A</u>)</div>
<svg class="i" style="left:794px;top:528px;width:8px;height:12px"><use href="#ma"/></svg>
<div class="t z" style="left:279px;top:561px">显示缩略图</div>
<div class="r d" style="top:561px">Ctrl+Shift+T</div>
<div class="sp" style="top:575px"></div>
<div class="t z" style="left:279px;top:591px">重新格式化代码(<u>R</u>)</div>
<div class="r d" style="top:591px">Ctrl+Alt+L</div>
<div class="t z" style="left:279px;top:617px">优化导入(<u>Z</u>)</div>
<div class="r d" style="top:617px">Ctrl+Alt+O</div>
<div class="t z" style="left:279px;top:644px">删除...(<u>D</u>)</div>
<div class="r d" style="top:644px">Delete</div>
<div class="sp" style="top:657px"></div>
<svg class="i" style="left:254px;top:664px" viewBox="0 0 18 18"><path d="M3 1l13 8-13 8z" fill="#499c54"/></svg>
<div class="t" style="left:279px;top:673px">运行(<u>U</u>) ''com.example.day17_servicetest' 中的测试'</div>
<div class="r d" style="top:673px">Ctrl+Shift+F10</div>
<svg class="i" style="left:255px;top:692px;width:16px;height:18px"><use href="#bug"/></svg>
<div class="t" style="left:279px;top:701px">调试(<u>D</u>) ''com.example.day17_servicetest' 中的测试'</div>
<svg class="i" style="left:254px;top:717px" viewBox="0 0 18 18"><path d="M1 2l7-2 3 2v9l-5 6-5-4z" fill="#777"/><path d="M10 7l8 5-8 5z" fill="#499c54"/></svg>
<div class="t" style="left:279px;top:726px">Run ''com.example.day17_servicetest' 中的测试' with Co<u>v</u>erage</div>
<div class="sp" style="top:740px"></div>
<svg class="i" style="left:255px;top:746px;width:16px;height:18px" viewBox="0 0 16 18"><path d="M7 1L0 9l7 8z" fill="#e8663c"/><path d="M9 1l7 8-7 8z" fill="#499c54"/></svg>
<div class="t" style="left:279px;top:755px">创建 ''com.example.day17_servicetest' 中的测试'...</div>
<div class="t" style="left:279px;top:782px">Show in Explorer</div>
<svg class="i" style="left:257px;top:802px;width:14px;height:14px" viewBox="0 0 14 14"><rect width="14" height="14" fill="#6e6e6e"/><path d="M3 3l4 4-4 4" fill="none" stroke="#f2f2f2"/></svg>
<div class="t" style="left:279px;top:809px">Open in Terminal</div>
<div class="sp" style="top:822px"></div>
<div class="t z" style="left:279px;top:839px">本地历史(<u>H</u>)</div>
<svg class="i" style="left:794px;top:832px;width:8px;height:12px"><use href="#ma"/></svg>
<svg class="i" style="left:255px;top:857px;width:16px;height:16px" viewBox="0 0 16 16"><path d="M2 7a6 6 0 0 1 11-3M14 9a6 6 0 0 1-11 3" fill="none" stroke="#777" stroke-width="2"/><path d="M15 0v6H9zM1 16v-6h6z" fill="#777"/></svg>
<div class="t" style="left:279px;top:865px">同步 'day17_servicetest'</div>
<div class="sb" style="top:878px"></div>
<div class="t" style="left:279px;top:895px">Directory 路径(<u>P</u>)</div>
<div class="r d" style="top:895px">Ctrl+Alt+F12</div>
<div class="sb" style="top:908px"></div>
<svg class="i" style="left:254px;top:916px" viewBox="0 0 18 18"><path d="M0 12h6V8l5 5-5 0zM6 13v5l3-3zM18 4h-5V0L7 5l6 4V6h5z" fill="#2f9ed8"/></svg>
<div class="t" style="left:279px;top:925px;letter-spacing:.1px">Compare With...</div>
<div class="r d" style="top:925px">Ctrl+D</div>
<div class="sb" style="top:938px"></div>
<div class="t" style="left:279px;top:955px">Remove BOM</div>
<div class="sb" style="top:968px"></div>
<svg class="i" style="left:254px;top:976px" viewBox="0 0 18 18"><path d="M9 0a9 9 0 0 0-3 17.500v-3c-2.500.500-3-1-3.500-2 2 .500 2.500 1.500 3.500 1.500 0-1 .500-1.500 1-2-3-.500-4-2-4-4.500 0-1 .300-2 1-2.700-.200-.600-.200-1.500.100-2.300 1 0 2 .500 2.700 1a8 8 0 0 1 4.400 0c.700-.500 1.700-1 2.700-1 .300.800.300 1.700.100 2.300.700.700 1 1.700 1 2.700 0 2.500-1 4-4 4.500.500.500 1 1 1 2.500v3.500A9 9 0 0 0 9 0z" fill="#222"/></svg>
<div class="t" style="left:279px;top:985px;letter-spacing:.1px">Create Gist...</div>
<div class="sb" style="top:998px"></div>
<div class="t" style="left:279px;top:1015px">Convert Java File to Kotlin File</div>
<div class="r d" style="top:1015px">Ctrl+Alt+Shift+K</div>

<!-- submenu -->
<div class="b" style="left:808px;top:184px;width:303px;height:835px;background:#f2f2f2;border:2px solid #c8c8c8;border-left-width:1px;box-sizing:border-box"></div>
<svg class="i" style="left:814px;top:190px"><use href="#cc"/></svg>
<div class="t" style="left:839px;top:199px;letter-spacing:-.8px">Java Class</div>
<svg class="i" style="left:814px;top:216px;width:19px;height:19px"><use href="#kt"/></svg>
<div class="t" style="left:839px;top:225px">Kotlin File/Class</div>
<svg class="i" style="left:814px;top:242px;width:19px;height:19px"><use href="#ar"/></svg>
<div class="t" style="left:839px;top:252px;letter-spacing:.1px">Android Resource File</div>
<svg class="i" style="left:814px;top:269px"><use href="#fo"/></svg>
<div class="t" style="left:839px;top:278px;letter-spacing:.3px">Android Resource Directory</div>
<svg class="i" style="left:814px;top:295px"><use href="#fo"/></svg>
<div class="t" style="left:839px;top:304px;letter-spacing:.1px">Sample Data Directory</div>
<svg class="i" style="left:814px;top:320px"><use href="#doc"/></svg>
<div class="t z" style="left:839px;top:330px">文件</div>
<svg class="i" style="left:814px;top:348px"><use href="#doc"/></svg>
<div class="b" style="left:826px;top:346px;width:7px;height:7px;border-radius:50%;background:#2f9ed8"></div>
<div class="t z" style="left:839px;top:357px">临时文件</div>
<div class="r" style="right:859px;top:357px;letter-spacing:.55px">Ctrl+Alt+Shift+Insert</div>
<svg class="i" style="left:814px;top:374px"><use href="#fp"/></svg>
<div class="t z" style="left:839px;top:383px">包</div>
<div class="sq" style="top:396px;height:3px"></div>
<svg class="i" style="left:814px;top:404px"><use href="#sss"/></svg>
<div class="t" style="left:839px;top:413px">C++ Class</div>
<svg class="i" style="left:814px;top:430px;width:19px;height:19px"><use href="#cp"/></svg>
<div class="t" style="left:839px;top:439px">C/C++ Source File</div>
<svg class="i" style="left:814px;top:456px;width:19px;height:19px"><use href="#hh"/></svg>
<div class="t" style="left:839px;top:465px">C/C++ Header File</div>
<div class="sq" style="top:479px"></div>
<svg class="i" style="left:814px;top:485px;width:18px;height:20px"><use href="#an"/></svg>
<div class="t" style="left:839px;top:495px">Image Asset</div>
<svg class="i" style="left:814px;top:512px;width:18px;height:20px"><use href="#an"/></svg>
<div class="t" style="left:839px;top:522px">Vector Asset</div>
<div class="sq" style="top:535px"></div>
<svg class="i" style="left:814px;top:543px;width:19px;height:19px"><use href="#kt"/></svg>
<div class="t" style="left:839px;top:552px">Kotlin Script</div>
<svg class="i" style="left:814px;top:569px;width:19px;height:19px"><use href="#jj"/></svg>
<div class="t" style="left:839px;top:578px">Singleton</div>
<svg class="i" style="left:814px;top:595px"><use href="#ggg"/></svg>
<div class="t" style="left:839px;top:604px">Gradle Kotlin DSL Build Script</div>
<svg class="i" style="left:814px;top:621px"><use href="#ggg"/></svg>
<div class="t" style="left:839px;top:630px">Gradle Kotlin DSL Settings</div>
<div class="sq" style="top:644px"></div>
<div class="t z" style="left:839px;top:660px">编辑文件模板...</div>
<div class="sq" style="top:674px"></div>
<svg class="i" style="left:814px;top:680px;width:18px;height:20px"><use href="#an"/></svg>
<div class="t" style="left:839px;top:690px">AIDL</div>
<svg class="i" style="left:1092px;top:683px;width:8px;height:12px"><use href="#ma"/></svg>
<svg class="i" style="left:814px;top:707px;width:18px;height:20px"><use href="#an"/></svg>
<div class="t" style="left:839px;top:717px">Activity</div>
<svg class="i" style="left:1092px;top:710px;width:8px;height:12px"><use href="#ma"/></svg>
<svg class="i" style="left:814px;top:733px;width:18px;height:20px"><use href="#an"/></svg>
<div class="t" style="left:839px;top:743px">Android Auto</div>
<svg class="i" style="left:1092px;top:736px;width:8px;height:12px"><use href="#ma"/></svg>
<svg class="i" style="left:814px;top:759px;width:18px;height:20px"><use href="#an"/></svg>
<div class="t" style="left:839px;top:769px">Folder</div>
<svg class="i" style="left:1092px;top:762px;width:8px;height:12px"><use href="#ma"/></svg>
<svg class="i" style="left:814px;top:785px;width:18px;height:20px"><use href="#an"/></svg>
<div class="t" style="left:839px;top:795px">Fragment</div>
<svg class="i" style="left:1092px;top:788px;width:8px;height:12px"><use href="#ma"/></svg>
<svg class="i" style="left:814px;top:811px;width:18px;height:20px"><use href="#an"/></svg>
<div class="t" style="left:839px;top:822px">Google</div>
<svg class="i" style="left:1092px;top:814px;width:8px;height:12px"><use href="#ma"/></svg>
<svg class="i" style="left:814px;top:838px;width:18px;height:20px"><use href="#an"/></svg>
<div class="t" style="left:839px;top:848px">Other</div>
<svg class="i" style="left:1092px;top:841px;width:8px;height:12px"><use href="#ma"/></svg>
<div class="b" style="left:809px;top:860px;width:300px;height:26px;background:#3b74d4"></div>
<svg class="i" style="left:814px;top:864px;width:18px;height:20px"><use href="#an"/></svg>
<div class="t w" style="left:839px;top:873px">Service</div>
<svg class="i" style="left:1092px;top:867px;width:8px;height:12px"><use href="#mw"/></svg>
<svg class="i" style="left:814px;top:890px;width:18px;height:20px"><use href="#an"/></svg>
<div class="t" style="left:839px;top:900px">UI Component</div>
<svg class="i" style="left:1092px;top:893px;width:8px;height:12px"><use href="#ma"/></svg>
<svg class="i" style="left:814px;top:917px;width:18px;height:20px"><use href="#an"/></svg>
<div class="t" style="left:839px;top:927px">Wear</div>
<svg class="i" style="left:1092px;top:920px;width:8px;height:12px"><use href="#ma"/></svg>
<svg class="i" style="left:814px;top:943px;width:18px;height:20px"><use href="#an"/></svg>
<div class="t" style="left:839px;top:953px">Widget</div>
<svg class="i" style="left:1092px;top:946px;width:8px;height:12px"><use href="#ma"/></svg>
<svg class="i" style="left:814px;top:969px;width:18px;height:20px"><use href="#an"/></svg>
<div class="t" style="left:839px;top:979px">XML</div>
<svg class="i" style="left:1092px;top:972px;width:8px;height:12px"><use href="#ma"/></svg>
<svg class="i" style="left:814px;top:996px;width:19px;height:19px"><use href="#rb"/></svg>
<div class="t" style="left:839px;top:1005px">Resource Bundle</div>

<!-- sub-submenu -->
<div class="b" style="left:1106px;top:857px;width:219px;height:55px;background:#f2f2f2;border:2px solid #c8c8c8;border-left-width:1px;box-sizing:border-box"></div>
<svg class="i" style="left:1114px;top:863px;width:19px;height:19px"><use href="#sv"/></svg>
<div class="t" style="left:1137px;top:872px">Service (IntentService)</div>
<div class="b" style="left:1107px;top:884px;width:216px;height:26px;background:#3b74d4"></div>
<svg class="i" style="left:1114px;top:890px;width:19px;height:19px"><use href="#sv"/></svg>
<div class="t w" style="left:1137px;top:898px">Service</div>
<svg class="i" style="left:1308px;top:902px;width:13px;height:22px" viewBox="0 0 13 22"><path d="M.500.500v16l4-4 3 7.500 3-1.200-3-7.300h5z" fill="#fff" stroke="#000"/></svg>

<div class="t" style="left:1708px;top:1030px;font-size:15.2px;color:rgba(255,255,255,.75);text-shadow:0 0 2px rgba(90,90,90,.6)">https://blog.csdn.net/qq_41205771</div>
</div>
</body></html>
